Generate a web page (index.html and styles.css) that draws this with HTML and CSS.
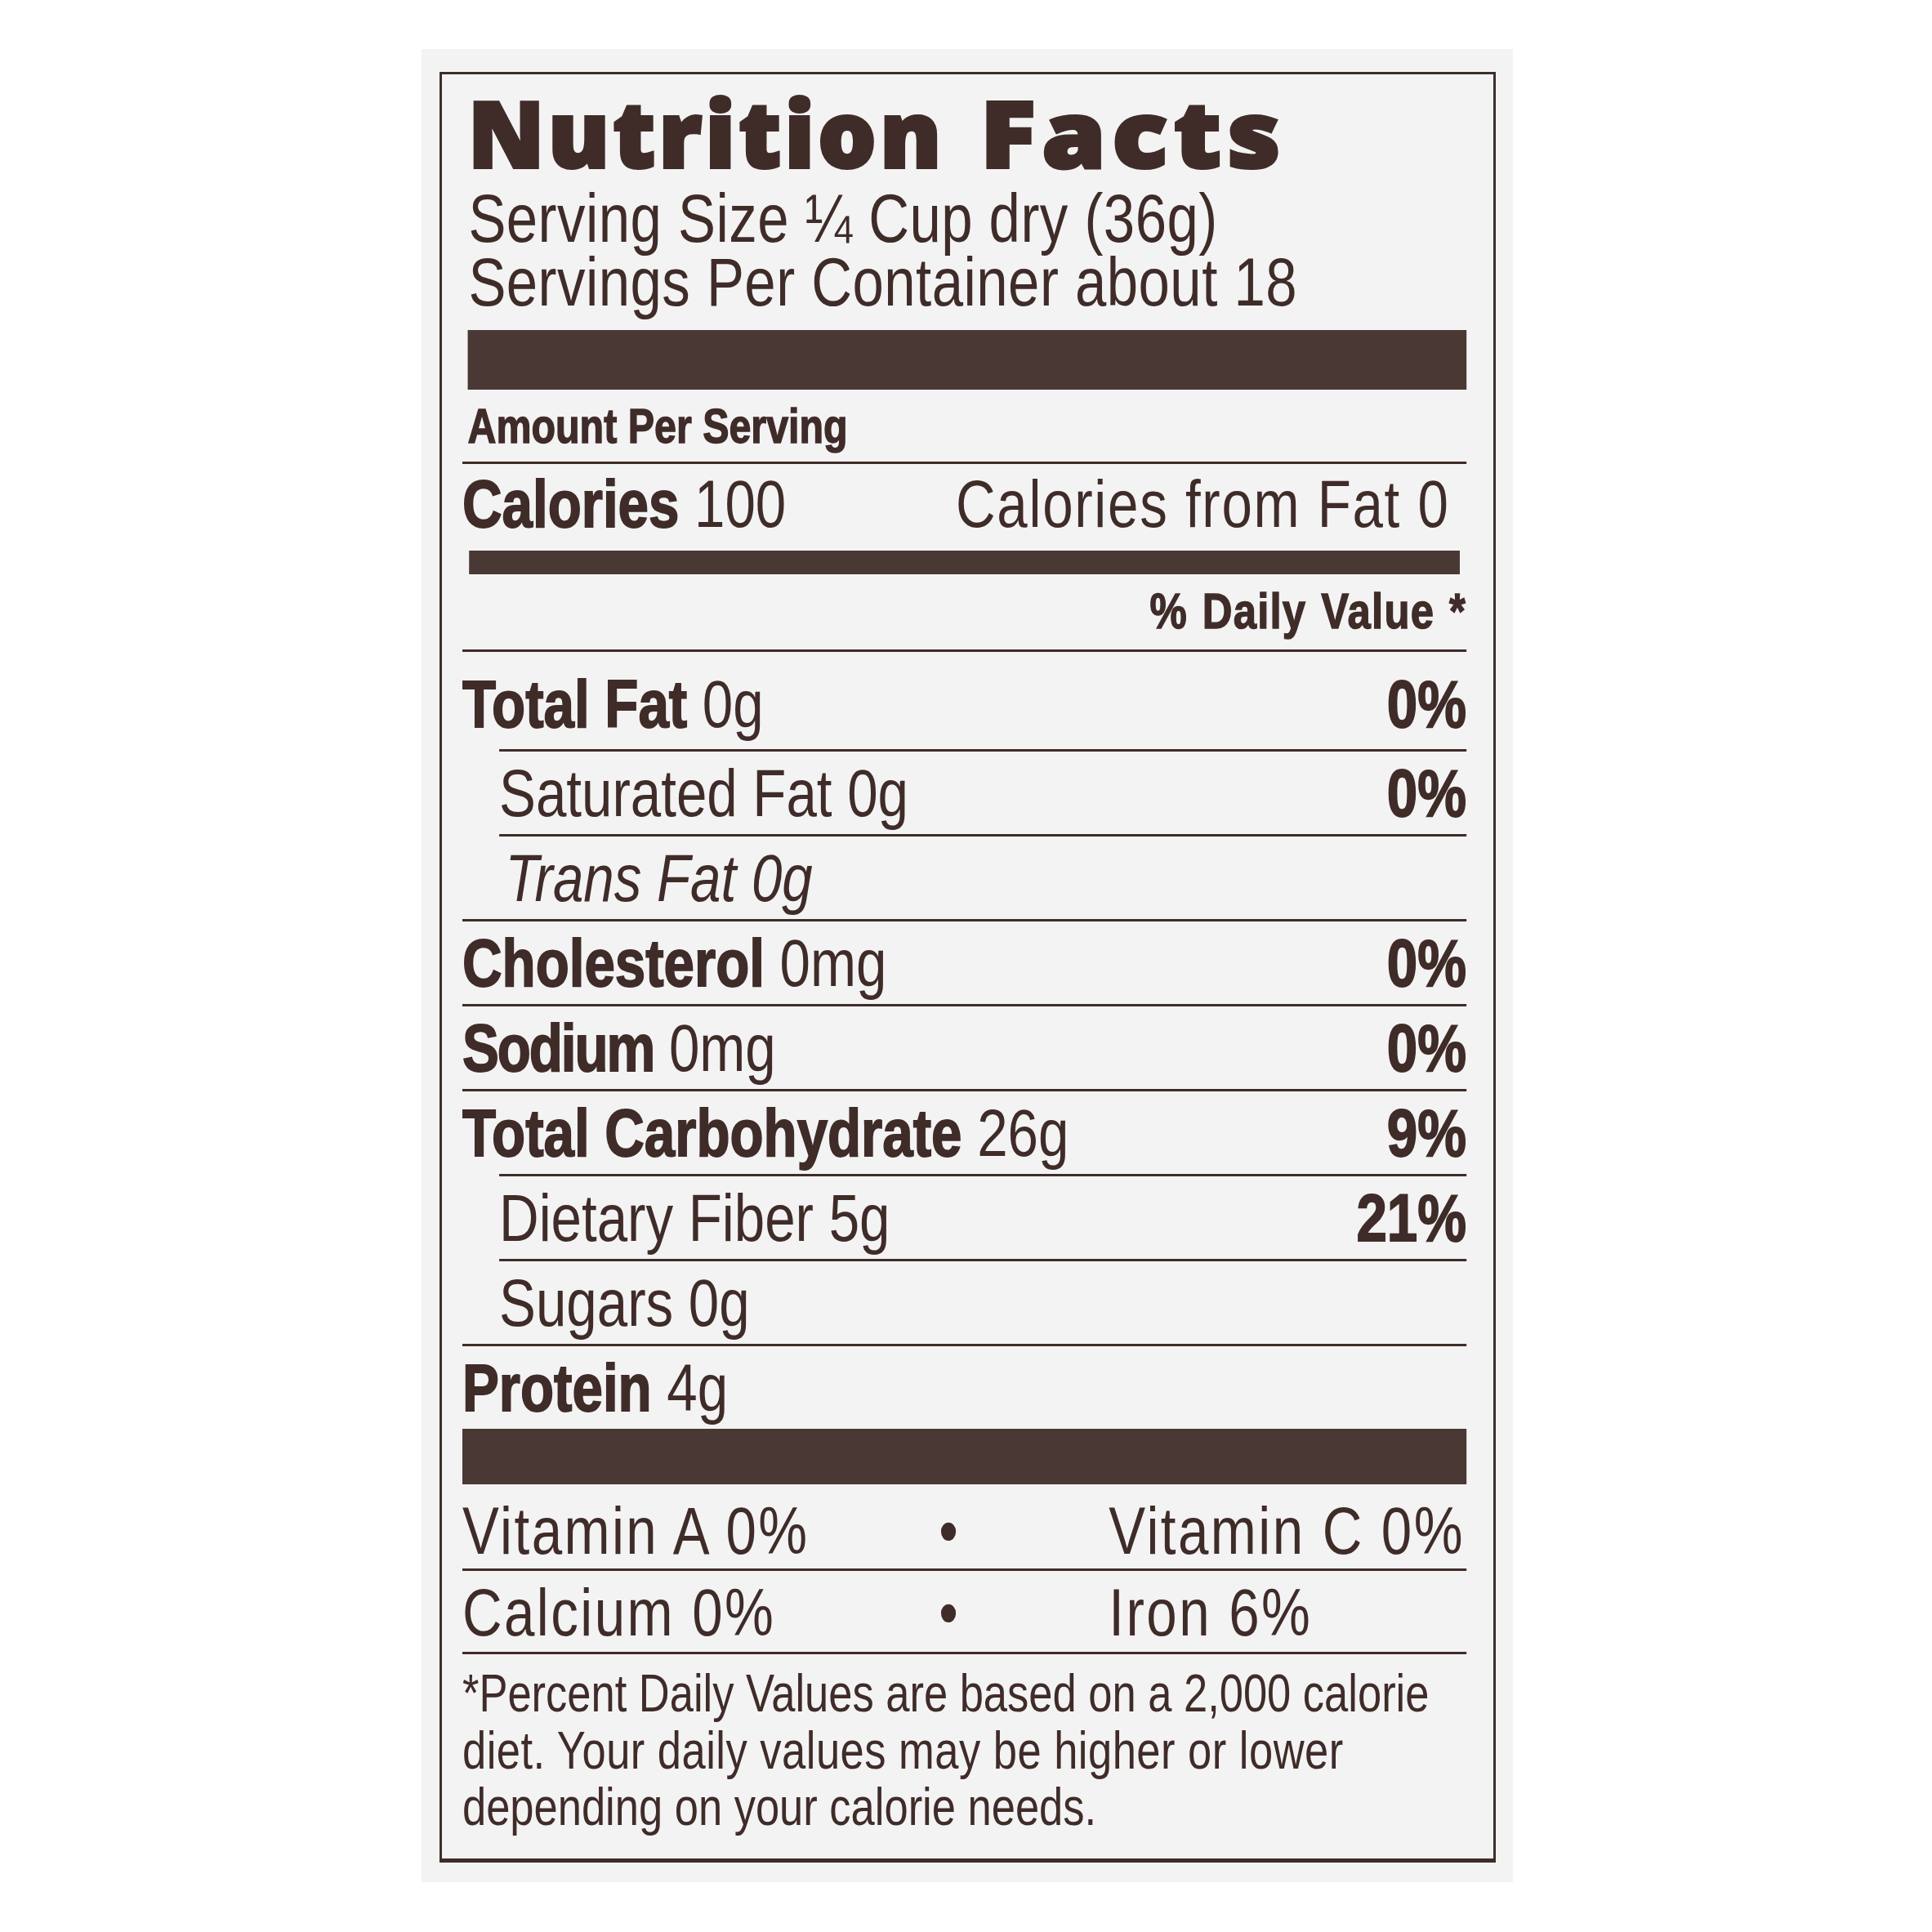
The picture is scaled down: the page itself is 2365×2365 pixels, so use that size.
FILE: index.html
```html
<!DOCTYPE html>
<html lang="en">
<head>
<meta charset="utf-8">
<title>Nutrition Facts</title>
<link rel="stylesheet" href="styles.css">
</head>
<body>
<div class="paper">
  <div class="label">
    <h1 class="title"><span class="w1">Nutrition</span> <span class="w2">Facts</span></h1>
    <div class="body">
      <div class="serving">Serving Size ¼ Cup dry (36g)<br>Servings Per Container about 18</div>
      <div class="bar bar-top"></div>
      <div class="amount">Amount Per Serving</div>
      <div class="calories"><span><b>Calories</b> 100</span><span class="cff">Calories from Fat 0</span></div>
      <div class="bar bar-mid"></div>
      <div class="dv">% Daily Value *</div>
      <div class="row first"><span><b>Total Fat</b> 0g</span><b>0%</b></div>
      <div class="row sub"><span>Saturated Fat 0g</span><b>0%</b></div>
      <div class="row sub"><i class="trans">Trans Fat 0g</i></div>
      <div class="row"><span><b>Cholesterol</b> 0mg</span><b>0%</b></div>
      <div class="row"><span><b class="tight">Sodium</b> 0mg</span><b>0%</b></div>
      <div class="row"><span><b>Total Carbohydrate</b> 26g</span><b>9%</b></div>
      <div class="row sub"><span>Dietary Fiber 5g</span><b>21%</b></div>
      <div class="row sub"><span>Sugars 0g</span></div>
      <div class="row"><span><b>Protein</b> 4g</span></div>
      <div class="bar bar-bottom"></div>
      <div class="vit vit-first"><span>Vitamin A 0%</span><span class="dot">•</span><span class="right">Vitamin C 0%</span></div>
      <div class="vit vit-second"><span>Calcium 0%</span><span class="dot">•</span><span class="right">Iron 6%</span></div>
      <p class="foot">*Percent Daily Values are based on a 2,000 calorie<br><span class="l2">diet. Your daily values may be higher or lower</span><br>depending on your calorie needs.</p>
    </div>
  </div>
</div>
</body>
</html>
```

FILE: styles.css
```css
:root {
  --ink: #3f2c29;
  --bar: #4a3835;
}

html, body {
  margin: 0;
  padding: 0;
  background: #ffffff;
}

.paper {
  box-sizing: border-box;
  width: 1336px;
  height: 2244px;
  margin: 60px 0 0 516px;
  padding: 28px 21px 24px 22px;
  background: #f3f3f3;
  display: flex;
}

.label {
  flex: 1;
  min-width: 0;
  display: flex;
  flex-direction: column;
  border: 3px solid var(--ink);
  border-bottom-width: 5px;
  padding: 15px 33px 0 25px;
  color: var(--ink);
  font-family: "Liberation Sans", Arial, sans-serif;
}

.title {
  margin: 0;
  padding-left: 7px;
  font-family: "Open Sans", sans-serif;
  font-weight: 800;
  font-size: 112px;
  line-height: 112px;
  word-spacing: 14px;
  white-space: nowrap;
  -webkit-text-stroke: 4px var(--ink);
}

.w1 {
  letter-spacing: 4.5px;
}

.w2 {
  display: inline-block;
  letter-spacing: 7px;
  word-spacing: 0;
  transform: scaleX(1.12);
  transform-origin: 0 50%;
}

/* condensed body: everything below the title is drawn 82% wide */
.body {
  flex: none;
  width: 1498.8px;
  transform: scaleX(0.82);
  transform-origin: 0 0;
}

b {
  font-weight: 700;
  -webkit-text-stroke: 1.8px var(--ink);
}

b.tight {
  letter-spacing: -2.5px;
}

.serving {
  margin-top: 10px;
  padding-left: 9px;
  font-size: 84px;
  line-height: 78px;
  letter-spacing: 0.6px;
  white-space: nowrap;
}

.bar {
  background: var(--bar);
}

.bar-top {
  height: 73px;
  margin-top: 20px;
  margin-left: 8px;
}

.amount {
  padding: 2px 0 0 8px;
  font-weight: 700;
  font-size: 59px;
  line-height: 86px;
  border-bottom: 3px solid var(--ink);
  -webkit-text-stroke: 1.4px var(--ink);
}

.calories {
  display: flex;
  justify-content: space-between;
  padding: 0 25px 9px 0;
  font-size: 82px;
  line-height: 97px;
  white-space: nowrap;
}

.cff {
  letter-spacing: 2.1px;
}

.bar-mid {
  height: 29px;
  margin: 0 10px 0 10px;
}

.dv {
  text-align: right;
  font-weight: 700;
  font-size: 62px;
  line-height: 89px;
  letter-spacing: 1.5px;
  word-spacing: 3px;
  padding-bottom: 3px;
  border-bottom: 3px solid var(--ink);
  -webkit-text-stroke: 1.4px var(--ink);
  white-space: nowrap;
}

.row {
  display: flex;
  justify-content: space-between;
  font-size: 82px;
  line-height: 101px;
  border-top: 3px solid var(--ink);
  white-space: nowrap;
}

.row.first {
  border-top: 0;
  padding: 13px 0 5px;
}

.row.sub {
  margin-left: 55px;
}

.trans {
  padding-left: 9px;
}

.bar-bottom {
  height: 68px;
}

.vit {
  display: grid;
  grid-template-columns: 702px 47px 1fr;
  font-size: 82px;
  letter-spacing: 3px;
  border-bottom: 3px solid var(--ink);
  white-space: nowrap;
}

.vit-first {
  padding-top: 10px;
  line-height: 93px;
}

.vit-second {
  padding-top: 2px;
  line-height: 97px;
}

.dot {
  text-align: center;
  letter-spacing: 0;
}

.right {
  padding-left: 216px;
}

.foot {
  margin: 0;
  padding-top: 14px;
  font-size: 64px;
  line-height: 69.5px;
  white-space: nowrap;
}

.l2 {
  letter-spacing: 0.6px;
}
```
